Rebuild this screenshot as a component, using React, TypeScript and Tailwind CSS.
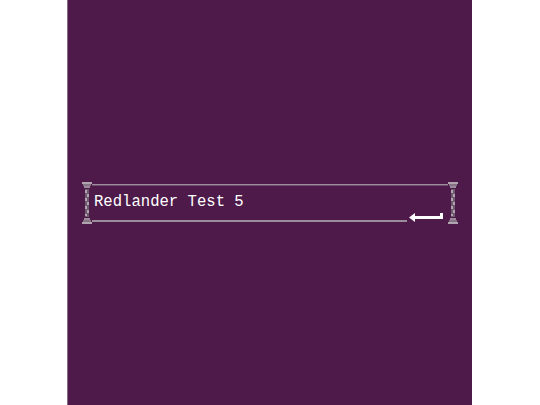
import React from "react";

function Pillar() {
  return (
    <svg width="10" height="44" viewBox="0 0 10 44" className="block shrink-0">
      <rect x="0" y="1" width="10" height="2" fill="#b0a4b0" />
      <rect x="1" y="3" width="8" height="2" fill="#857285" />
      <rect x="2" y="5" width="6" height="2" fill="#9a8a9a" />
      <rect x="3" y="8" width="4" height="28" fill="#6e5a6e" />
      <rect x="3" y="9" width="2" height="3" fill="#b0a4b0" />
      <rect x="5" y="13" width="2" height="3" fill="#b0a4b0" />
      <rect x="3" y="17" width="2" height="3" fill="#b0a4b0" />
      <rect x="5" y="21" width="2" height="3" fill="#b0a4b0" />
      <rect x="3" y="25" width="2" height="3" fill="#b0a4b0" />
      <rect x="5" y="29" width="2" height="3" fill="#b0a4b0" />
      <rect x="3" y="33" width="2" height="2" fill="#b0a4b0" />
      <rect x="2" y="37" width="6" height="2" fill="#9a8a9a" />
      <rect x="1" y="39" width="8" height="2" fill="#857285" />
      <rect x="0" y="41" width="10" height="2" fill="#b0a4b0" />
    </svg>
  );
}

export default function App() {
  return (
    <div className="w-[540px] h-[405px] bg-white flex">
      <div className="ml-[67px] w-[405px] h-[405px] bg-[#4e1a4a] border-l border-[#8a6a88] flex items-center px-[14px]">
        <div className="flex items-center w-full">
          <Pillar />
          <div className="flex-1 h-[38px] flex flex-col">
            <div className="h-[2px] bg-[#9c8c9c] border-b border-[#6e4a6c]" />
            <div className="flex-1 flex items-center pl-[2px] pt-[8px]">
              <span
                className="text-white text-[15.6px] leading-none"
                style={{ fontFamily: '"Liberation Mono", "DejaVu Sans Mono", monospace' }}
              >
                Redlander Test 5
              </span>
            </div>
            <div className="flex items-end h-[9px]">
              <div className="flex-1 h-[2px] bg-[#9c8c9c]" />
              <svg width="36" height="9" viewBox="0 0 36 9" className="block shrink-0 ml-[2px]">
                <rect x="5" y="3" width="29" height="3" fill="#ffffff" />
                <rect x="31" y="0" width="3" height="6" fill="#ffffff" />
                <polygon points="0,4.5 6,0 6,9" fill="#ffffff" />
              </svg>
              <div className="w-[3px] h-[2px]" />
            </div>
          </div>
          <Pillar />
        </div>
      </div>
    </div>
  );
}
